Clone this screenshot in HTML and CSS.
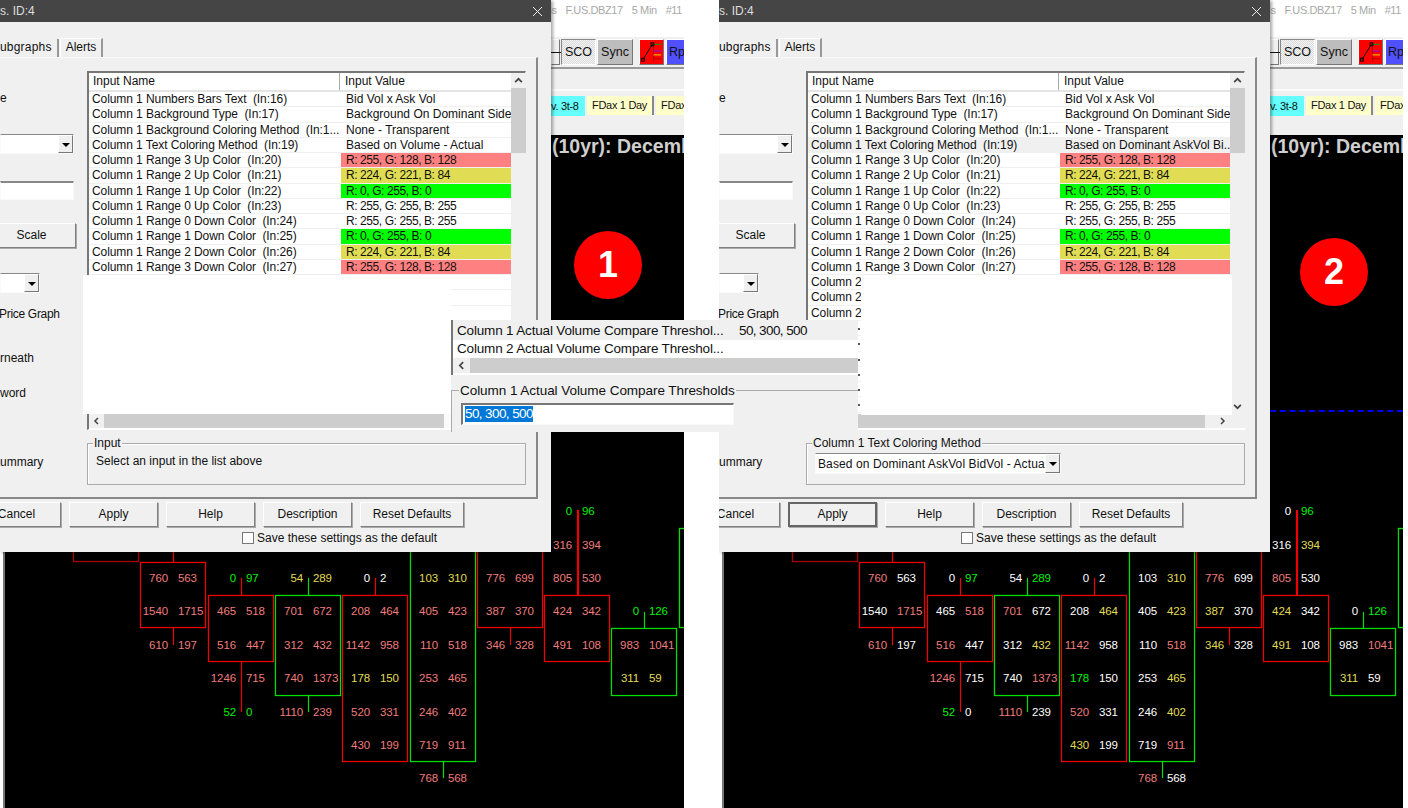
FILE: index.html
```html
<!DOCTYPE html>
<html lang="en">
<head>
    <meta charset="UTF-8">
    <title>Study settings comparison</title>
    <link rel="stylesheet" href="styles.css">
</head>
<body>

<div class="shots">

    <!-- Screenshot 1 -->
    <section class="shot" id="shot-1">
        <div class="chart-window">
            <div class="win-head"><span>IBs</span><span>F.US.DBZ17</span><span>5 Min</span><span>#11</span></div>
            <div class="toolbar">
                <div class="tool tool-cut">&#8212;</div>
                <div class="tool tool-sco">SCO</div>
                <div class="tool tool-sync">Sync</div>
                <div class="tool tool-red">
                    <svg viewBox="0 0 24 24" width="24" height="24"><path d="M14 4v18" stroke="#a00" fill="none"/><path d="M14 4h8" stroke="#0a0"/><path d="M14 11h8" stroke="#80f"/><path d="M14 15h8" stroke="#dd0"/><path d="M14 19h8" stroke="#a00"/><path d="M3 20 13 4" stroke="#000" fill="none"/><rect x="1.5" y="18.5" width="3" height="3" fill="none" stroke="#000"/><rect x="11.5" y="2.5" width="3" height="3" fill="none" stroke="#000"/></svg>
                </div>
                <div class="tool tool-blue">Rp</div>
            </div>
            <div class="tabstrip">
                <div class="ctab ctab-cyan">v. 3t-8</div>
                <div class="ctab">FDax 1 Day</div>
                <div class="ctab">FDax</div>
            </div>
            <div class="chart"></div>
        </div>
        <div class="plot" data-set="0"></div>
        <div class="chart-title">(10yr): Decemb</div>
        <div class="marker marker-1">1</div>

        <div class="dialog">
            <div class="dlg-title"><span>s. ID:4</span><svg class="dlg-close" viewBox="0 0 10 10"><path d="M0 0 10 10M10 0 0 10"/></svg></div>
            <div class="dlg-tabs">
                <div class="dlg-tab">ubgraphs</div>
                <div class="dlg-tab">Alerts</div>
            </div>
            <div class="pane">
                <div class="pane-side">
                    <div class="side-text side-tag-top">e</div>
                    <div class="combo side-combo-a"><span class="combo-arrow"></span></div>
                    <div class="edit side-edit"></div>
                    <div class="btn side-scale">Scale</div>
                    <div class="combo side-combo-b"><span class="combo-arrow"></span></div>
                    <div class="side-text side-graph">Price Graph</div>
                    <div class="side-text side-beneath">rneath</div>
                    <div class="side-text side-keyword">word</div>
                    <div class="side-text side-summary">ummary</div>
                </div>
                <div class="pane-main">
                    <div class="list">
                        <div class="list-body">
                            <div class="list-head"><div>Input Name</div><div>Input Value</div></div>
                            <div class="row"><div class="name">Column 1 Numbers Bars Text  (In:16)</div><div class="value">Bid Vol x Ask Vol</div></div>
                            <div class="row"><div class="name">Column 1 Background Type  (In:17)</div><div class="value">Background On Dominant Side</div></div>
                            <div class="row"><div class="name">Column 1 Background Coloring Method  (In:1...</div><div class="value">None - Transparent</div></div>
                            <div class="row"><div class="name">Column 1 Text Coloring Method  (In:19)</div><div class="value">Based on Volume - Actual</div></div>
                            <div class="row"><div class="name">Column 1 Range 3 Up Color  (In:20)</div><div class="value v-rgb v-red">R: 255, G: 128, B: 128</div></div>
                            <div class="row"><div class="name">Column 1 Range 2 Up Color  (In:21)</div><div class="value v-rgb v-yellow">R: 224, G: 221, B: 84</div></div>
                            <div class="row"><div class="name">Column 1 Range 1 Up Color  (In:22)</div><div class="value v-rgb v-green">R: 0, G: 255, B: 0</div></div>
                            <div class="row"><div class="name">Column 1 Range 0 Up Color  (In:23)</div><div class="value v-rgb">R: 255, G: 255, B: 255</div></div>
                            <div class="row"><div class="name">Column 1 Range 0 Down Color  (In:24)</div><div class="value v-rgb">R: 255, G: 255, B: 255</div></div>
                            <div class="row"><div class="name">Column 1 Range 1 Down Color  (In:25)</div><div class="value v-rgb v-green">R: 0, G: 255, B: 0</div></div>
                            <div class="row"><div class="name">Column 1 Range 2 Down Color  (In:26)</div><div class="value v-rgb v-yellow">R: 224, G: 221, B: 84</div></div>
                            <div class="row"><div class="name">Column 1 Range 3 Down Color  (In:27)</div><div class="value v-rgb v-red">R: 255, G: 128, B: 128</div></div>
                            <div class="row"><div class="name"></div><div class="value"></div></div>
                            <div class="row"><div class="name"></div><div class="value"></div></div>
                            <div class="row"><div class="name"></div><div class="value"></div></div>
                        </div>
                        <div class="vscroll">
                            <svg class="chev" viewBox="0 0 8 8"><path d="M1 5.5 4 2.5 7 5.5"/></svg>
                            <div class="vthumb"></div>
                            <svg class="chev chev-end" viewBox="0 0 8 8"><path d="M1 2.5 4 5.5 7 2.5"/></svg>
                        </div>
                        <div class="hscroll">
                            <svg class="chev" viewBox="0 0 8 8"><path d="M5.5 1 2.5 4 5.5 7"/></svg>
                            <div class="hthumb"></div>
                            <svg class="chev" viewBox="0 0 8 8"><path d="M2.5 1 5.5 4 2.5 7"/></svg>
                        </div>
                        <div class="corner"></div>
                    </div>
                    <div class="group">
                        <div class="group-label">Input</div>
                        <div class="group-text">Select an input in the list above</div>
                    </div>
                </div>
            </div>
            <div class="dlg-actions">
                <div class="btn btn-cancel">Cancel</div>
                <div class="btn">Apply</div>
                <div class="btn">Help</div>
                <div class="btn">Description</div>
                <div class="btn btn-wide">Reset Defaults</div>
            </div>
            <div class="dlg-save"><span class="check"></span>Save these settings as the default</div>
            <div class="patch patch-1"></div>
            <div class="patch patch-1b"></div>
        </div>
    </section>

    <!-- Screenshot 2 -->
    <section class="shot" id="shot-2">
        <div class="chart-window">
            <div class="win-head"><span>IBs</span><span>F.US.DBZ17</span><span>5 Min</span><span>#11</span></div>
            <div class="toolbar">
                <div class="tool tool-cut">&#8212;</div>
                <div class="tool tool-sco">SCO</div>
                <div class="tool tool-sync">Sync</div>
                <div class="tool tool-red">
                    <svg viewBox="0 0 24 24" width="24" height="24"><path d="M14 4v18" stroke="#a00" fill="none"/><path d="M14 4h8" stroke="#0a0"/><path d="M14 11h8" stroke="#80f"/><path d="M14 15h8" stroke="#dd0"/><path d="M14 19h8" stroke="#a00"/><path d="M3 20 13 4" stroke="#000" fill="none"/><rect x="1.5" y="18.5" width="3" height="3" fill="none" stroke="#000"/><rect x="11.5" y="2.5" width="3" height="3" fill="none" stroke="#000"/></svg>
                </div>
                <div class="tool tool-blue">Rp</div>
            </div>
            <div class="tabstrip">
                <div class="ctab ctab-cyan">v. 3t-8</div>
                <div class="ctab">FDax 1 Day</div>
                <div class="ctab">FDax</div>
            </div>
            <div class="chart"></div>
        </div>
        <div class="plot" data-set="1"></div>
        <div class="chart-title">(10yr): Decemb</div>
        <div class="dash-line"></div>
        <div class="marker marker-2">2</div>

        <div class="dialog">
            <div class="dlg-title"><span>s. ID:4</span><svg class="dlg-close" viewBox="0 0 10 10"><path d="M0 0 10 10M10 0 0 10"/></svg></div>
            <div class="dlg-tabs">
                <div class="dlg-tab">ubgraphs</div>
                <div class="dlg-tab">Alerts</div>
            </div>
            <div class="pane">
                <div class="pane-side">
                    <div class="side-text side-tag-top">e</div>
                    <div class="combo side-combo-a"><span class="combo-arrow"></span></div>
                    <div class="edit side-edit"></div>
                    <div class="btn side-scale">Scale</div>
                    <div class="combo side-combo-b"><span class="combo-arrow"></span></div>
                    <div class="side-text side-graph">Price Graph</div>
                    <div class="side-text side-beneath"></div>
                    <div class="side-text side-keyword"></div>
                    <div class="side-text side-summary">ummary</div>
                </div>
                <div class="pane-main">
                    <div class="list">
                        <div class="list-body">
                            <div class="list-head"><div>Input Name</div><div>Input Value</div></div>
                            <div class="row"><div class="name">Column 1 Numbers Bars Text  (In:16)</div><div class="value">Bid Vol x Ask Vol</div></div>
                            <div class="row"><div class="name">Column 1 Background Type  (In:17)</div><div class="value">Background On Dominant Side</div></div>
                            <div class="row"><div class="name">Column 1 Background Coloring Method  (In:1...</div><div class="value">None - Transparent</div></div>
                            <div class="row row-active"><div class="name">Column 1 Text Coloring Method  (In:19)</div><div class="value">Based on Dominant AskVol Bi...</div></div>
                            <div class="row"><div class="name">Column 1 Range 3 Up Color  (In:20)</div><div class="value v-rgb v-red">R: 255, G: 128, B: 128</div></div>
                            <div class="row"><div class="name">Column 1 Range 2 Up Color  (In:21)</div><div class="value v-rgb v-yellow">R: 224, G: 221, B: 84</div></div>
                            <div class="row"><div class="name">Column 1 Range 1 Up Color  (In:22)</div><div class="value v-rgb v-green">R: 0, G: 255, B: 0</div></div>
                            <div class="row"><div class="name">Column 1 Range 0 Up Color  (In:23)</div><div class="value v-rgb">R: 255, G: 255, B: 255</div></div>
                            <div class="row"><div class="name">Column 1 Range 0 Down Color  (In:24)</div><div class="value v-rgb">R: 255, G: 255, B: 255</div></div>
                            <div class="row"><div class="name">Column 1 Range 1 Down Color  (In:25)</div><div class="value v-rgb v-green">R: 0, G: 255, B: 0</div></div>
                            <div class="row"><div class="name">Column 1 Range 2 Down Color  (In:26)</div><div class="value v-rgb v-yellow">R: 224, G: 221, B: 84</div></div>
                            <div class="row"><div class="name">Column 1 Range 3 Down Color  (In:27)</div><div class="value v-rgb v-red">R: 255, G: 128, B: 128</div></div>
                            <div class="row"><div class="name">Column 2</div><div class="value"></div></div>
                            <div class="row"><div class="name">Column 2</div><div class="value"></div></div>
                            <div class="row"><div class="name">Column 2</div><div class="value"></div></div>
                            <div class="row row-peek"><div class="name"></div><div class="value"></div></div>
                            <div class="row row-peek"><div class="name"></div><div class="value"></div></div>
                            <div class="row row-peek"><div class="name"></div><div class="value"></div></div>
                            <div class="row row-peek"><div class="name"></div><div class="value"></div></div>
                            <div class="row row-peek"><div class="name"></div><div class="value"></div></div>
                            <div class="row row-peek"><div class="name"></div><div class="value"></div></div>
                        </div>
                        <div class="vscroll">
                            <svg class="chev" viewBox="0 0 8 8"><path d="M1 5.5 4 2.5 7 5.5"/></svg>
                            <div class="vthumb"></div>
                            <svg class="chev chev-end" viewBox="0 0 8 8"><path d="M1 2.5 4 5.5 7 2.5"/></svg>
                        </div>
                        <div class="hscroll">
                            <svg class="chev" viewBox="0 0 8 8"><path d="M5.5 1 2.5 4 5.5 7"/></svg>
                            <div class="hthumb"></div>
                            <svg class="chev" viewBox="0 0 8 8"><path d="M2.5 1 5.5 4 2.5 7"/></svg>
                        </div>
                        <div class="corner"></div>
                    </div>
                    <div class="group">
                        <div class="group-label">Column 1 Text Coloring Method</div>
                        <div class="combo combo-method"><span class="combo-value">Based on Dominant AskVol BidVol - Actua</span><span class="combo-arrow"></span></div>
                    </div>
                </div>
            </div>
            <div class="dlg-actions">
                <div class="btn btn-cancel">Cancel</div>
                <div class="btn btn-default">Apply</div>
                <div class="btn">Help</div>
                <div class="btn">Description</div>
                <div class="btn btn-wide">Reset Defaults</div>
            </div>
            <div class="dlg-save"><span class="check"></span>Save these settings as the default</div>
            <div class="patch patch-2"></div>
        </div>
    </section>

    <!-- Enlarged piece pasted across both screenshots -->
    <div class="inset">
        <div class="inset-list">
            <div class="inset-row inset-row-active"><div class="inset-name">Column 1 Actual Volume Compare Threshol...</div><div class="inset-value">50, 300, 500</div></div>
            <div class="inset-row"><div class="inset-name">Column 2 Actual Volume Compare Threshol...</div><div class="inset-value"></div></div>
            <div class="inset-scroll">
                <svg class="chev" viewBox="0 0 8 8"><path d="M5.5 1 2.5 4 5.5 7"/></svg>
                <div class="inset-thumb"></div>
            </div>
        </div>
        <div class="inset-group">
            <div class="inset-label">Column 1 Actual Volume Compare Thresholds</div>
            <div class="inset-edit"><span class="selected">50, 300, 500</span></div>
        </div>
    </div>
</div>

<script src="chart.js"></script>
</body>
</html>
```

FILE: styles.css
```css
body {
    margin: 0;
    background-color: #fff;
    font-family: "Liberation Sans", Arial, sans-serif;
    font-size: 12px;
    color: #111;
    overflow: hidden;
}
.shots {
    position: relative;
    display: flex;
    gap: 35px;
    width: 1408px;
    height: 808px;
}
.shot {
    position: relative;
    width: 684px;
    height: 808px;
    overflow: hidden;
    flex-shrink: 0;
}

/* chart window behind the dialog */
.chart-window {
    display: flex;
    flex-direction: column;
    height: 100%;
}
.win-head {
    display: flex;
    justify-content: flex-end;
    gap: 9px;
    height: 37px;
    padding: 4px 2px 0 0;
    box-sizing: border-box;
    color: #a8a8a8;
    font-size: 11px;
    letter-spacing: -0.4px;
    line-height: 13px;
}
.toolbar {
    display: flex;
    height: 32px;
    padding: 2px 0 0 551px;
    box-sizing: border-box;
    background-color: #f0f0f0;
    border-bottom: 2px solid #999;
}
.tool {
    display: flex;
    align-items: center;
    justify-content: center;
    flex-shrink: 0;
    height: 26px;
    margin-right: 1px;
    padding-bottom: 1px;
    box-sizing: border-box;
    border: 1px solid;
    border-color: #fff #777 #777 #fff;
    font-size: 12.5px;
}
.tool-cut { width: 9px; background-color: #f0f0f0; }
.tool-sco {
    width: 35px;
    border-color: #888 #fff #fff #888;
    background: repeating-conic-gradient(#d8d8d8 0 25%, #f6f6f6 0 50%) 0 0 / 2px 2px;
}
.tool-sync { width: 36px; margin-right: 6px; background-color: #bdbdbd; }
.tool-red { width: 25px; margin-right: 2px; background-color: #f00; }
.tool-blue { width: 30px; justify-content: flex-start; padding-left: 2px; background-color: #5050ff; color: #111; }
.tabstrip {
    display: flex;
    align-items: flex-start;
    height: 66px;
    padding: 27px 0 0 551px;
    box-sizing: border-box;
    background: linear-gradient(#f0f0f0 20px, #fbfbfb 20px, #fbfbfb 22px, #f0f0f0 22px);
}
.ctab {
    flex-shrink: 0;
    height: 19px;
    padding: 0 5px;
    margin-right: 2px;
    border-right: 2px solid #888;
    background-color: #ffffcc;
    font-size: 11px;
    letter-spacing: -0.3px;
    line-height: 18px;
}
.ctab-cyan {
    width: 29px;
    padding: 0 5px 0 0;
    border-right: 0;
    border-top: 1px solid #6ff;
    background-color: #66ffff;
    white-space: nowrap;
}
.chart {
    flex: 1;
    background-color: #000;
}
.chart-title {
    position: absolute;
    left: 552px;
    top: 136px;
    color: #cfcfcf;
    font-size: 19.5px;
    font-weight: bold;
    line-height: 20px;
    white-space: nowrap;
}
.dash-line {
    position: absolute;
    left: 551px;
    right: 0;
    top: 410px;
    border-top: 2px dashed #0000ff;
}
.marker {
    position: absolute;
    width: 68px;
    height: 68px;
    border-radius: 50%;
    background-color: #f00;
    color: #fff;
    font-size: 36px;
    font-weight: bold;
    line-height: 68px;
    text-align: center;
}
.marker-1 { left: 574px; top: 231px; }
.marker-2 { left: 581px; top: 238px; }

/* numbers bars, placed by chart.js */
.plot {
    position: absolute;
    inset: 0;
    border-left: 3px solid #fff;
    box-sizing: border-box;
}
.plot::before {
    content: "";
    position: absolute;
    left: 0;
    top: 135px;
    bottom: 0;
    width: 2px;
    background-color: #777;
}
.bar-box, .bar-stem {
    position: absolute;
    box-sizing: border-box;
}
.bar-box { border: 1px solid; }
.bar-stem { width: 1px; }
.bar-stem-thick { width: 2px; }
.bar-cell {
    position: absolute;
    width: 40px;
    font-size: 11.5px;
    letter-spacing: -0.1px;
    line-height: 14px;
}
.bar-cell-left { text-align: right; }
.c-s { color: #f07c7c; }
.c-w { color: #fff; }
.c-y { color: #e0dd54; }
.c-g { color: #00f000; }

/* settings dialog */
.dialog {
    position: absolute;
    left: 0;
    top: 0;
    width: 551px;
    height: 552px;
    background-color: #f0f0f0;
    box-shadow: 2px 1px 3px rgba(0, 0, 0, 0.35);
}
.dlg-title {
    display: flex;
    align-items: center;
    justify-content: space-between;
    height: 22px;
    padding-right: 9px;
    box-sizing: border-box;
    background-color: #454545;
    color: #ddd;
}
.dlg-close {
    width: 9px;
    height: 9px;
    stroke: #fff;
    stroke-width: 1;
    fill: none;
}
.dlg-tabs {
    display: flex;
    align-items: flex-end;
    height: 35px;
}
.dlg-tab {
    height: 18px;
    padding-right: 5px;
    margin-right: 1px;
    border-right: 2px solid #999;
    letter-spacing: 0.2px;
    line-height: 17px;
}
.dlg-tab + .dlg-tab {
    padding-left: 5px;
    border-top: 1px solid #fff;
    border-left: 1px solid #fff;
    letter-spacing: 0;
}
.pane {
    display: flex;
    width: 538px;
    height: 442px;
    box-sizing: border-box;
    border-top: 1px solid #fafafa;
    border-right: 2px solid #888;
    border-bottom: 2px solid #888;
}
.pane-side {
    width: 87px;
    flex-shrink: 0;
}
.pane-main {
    width: 439px;
    padding-top: 13px;
}

/* left column, cut off by the screenshot edge */
.side-text {
    height: 16px;
    line-height: 16px;
    white-space: nowrap;
}
.side-tag-top { margin-top: 32px; }
.side-combo-a { margin-top: 28px; width: 74px; height: 20px; }
.side-edit { margin-top: 27px; width: 74px; height: 19px; }
.side-scale { margin: 23px 0 0 -13px; width: 88px; height: 25px; }
.side-combo-b { margin-top: 25px; width: 40px; height: 20px; }
.side-graph { margin: 13px 0 0 -1px; letter-spacing: -0.3px; }
.side-beneath { margin-top: 28px; }
.side-keyword { margin-top: 19px; }
.side-summary { margin-top: 53px; }

.combo, .edit {
    display: flex;
    justify-content: flex-end;
    box-sizing: border-box;
    border: 1px solid #fafafa;
    border-top-color: #888;
    background-color: #fff;
}
.edit { border-top-width: 2px; }
.combo-arrow {
    position: relative;
    width: 15px;
    flex-shrink: 0;
    box-sizing: border-box;
    border: 1px solid;
    border-color: #fff #777 #777 #fff;
    background-color: #f0f0f0;
}
.combo-arrow::after {
    content: "";
    position: absolute;
    left: 3px;
    top: 7px;
    border: 4px solid transparent;
    border-top: 4px solid #000;
    border-bottom: 0;
}
.btn {
    height: 25px;
    width: 89px;
    flex-shrink: 0;
    box-sizing: border-box;
    border: 1px solid;
    border-color: #fff #808080 #808080 #fff;
    box-shadow: 1px 1px 0 #aaa;
    background-color: #f0f0f0;
    line-height: 23px;
    text-align: center;
}

/* inputs list */
.list {
    display: grid;
    grid-template-columns: 422px 15px;
    grid-template-rows: 341px 14px;
    height: 359px;
    box-sizing: border-box;
    border-top: 2px solid #777;
    border-left: 2px solid #777;
    border-right: 1px solid #fff;
    border-bottom: 1px solid #fff;
    background-color: #fff;
}
.list-body {
    overflow: hidden;
}
.list-head {
    display: grid;
    grid-template-columns: 251px 171px;
    height: 19px;
    box-sizing: border-box;
    border-bottom: 2px solid #e4e4e4;
    background-color: #fff;
    line-height: 17px;
}
.list-head div { padding-left: 4px; border-right: 1px solid #aaa; }
.list-head div + div { padding-left: 5px; border-right: 0; }
.row {
    display: grid;
    grid-template-columns: 251px 171px;
    height: 15.27px;
    box-sizing: border-box;
    border-bottom: 1px solid #f0f0f0;
    line-height: 14px;
    white-space: pre;
}
.row-active { background-color: #f0f0f0; }
.name {
    padding-left: 3px;
    overflow: hidden;
    letter-spacing: -0.08px;
}
.row-peek .name::after {
    content: "";
    display: block;
    width: 2px;
    height: 2px;
    margin: 7px 0 0 47px;
    background-color: #555;
}
.value {
    padding-left: 5px;
    margin-left: 1px;
    overflow: hidden;
}
.v-rgb { letter-spacing: -0.42px; }
.v-red { background-color: #ff8080; }
.v-yellow { background-color: #e0dd54; }
.v-green { background-color: #00ff00; }
.vscroll {
    display: flex;
    flex-direction: column;
    background-color: #f0f0f0;
}
.vthumb {
    height: 65px;
    background-color: #cdcdcd;
}
.chev {
    display: block;
    flex-shrink: 0;
    width: 15px;
    height: 15px;
    padding: 3px;
    box-sizing: border-box;
    fill: none;
    stroke: #444;
    stroke-width: 1.5;
}
.chev-end { margin-top: auto; }
.hscroll {
    display: flex;
    background-color: #f0f0f0;
}
.hthumb {
    width: 382px;
    background-color: #cdcdcd;
}
.hscroll .chev { height: 14px; }
.hscroll .chev:last-child { margin-left: auto; }
.corner { background-color: #f0f0f0; }

/* group box under the list */
.group {
    position: relative;
    height: 42px;
    margin-top: 13px;
    box-sizing: border-box;
    border: 1px solid #aaa;
    box-shadow: inset 1px 1px 0 #fff;
}
.group-label {
    position: absolute;
    left: 5px;
    top: -8px;
    padding: 0 1px;
    background-color: #f0f0f0;
    line-height: 14px;
}
.group-text {
    padding: 10px 0 0 8px;
}
.combo-method {
    width: 246px;
    height: 21px;
    margin: 9px 0 0 8px;
}
.combo-value {
    flex: 1;
    padding: 3px 0 0 2px;
    overflow: hidden;
    letter-spacing: 0.1px;
    white-space: nowrap;
}

/* dialog footer */
.dlg-actions {
    display: flex;
    gap: 8px;
    margin: 3px 0 0 -28px;
}
.btn-wide { width: 104px; }
.btn-default {
    border: 2px solid #666;
    line-height: 21px;
}
.dlg-save {
    display: flex;
    align-items: center;
    gap: 3px;
    margin: 4px 0 0 242px;
}
.check {
    width: 10px;
    height: 10px;
    border: 1px solid #777;
    background-color: #fff;
}

/* white paint over the empty list area */
.patch {
    position: absolute;
    background-color: #fff;
}
.patch-1 { left: 83px; top: 275px; width: 368px; height: 139px; }
.patch-1b { left: 444px; top: 414px; width: 7px; height: 14px; background-color: #fafafa; }
.patch-2 { left: 142px; top: 275px; width: 371px; height: 140px; }

/* pasted piece of a later dialog state */
.inset {
    position: absolute;
    left: 451px;
    top: 320px;
    width: 407px;
    height: 112px;
    overflow: hidden;
    background-color: #f0f0f0;
    font-size: 13.5px;
}
.inset-list {
    height: 55px;
    box-sizing: border-box;
    border-left: 2px solid #777;
    background-color: #fff;
}
.inset-row {
    display: grid;
    grid-template-columns: 281px 1fr;
    height: 20px;
    padding-left: 4px;
    box-sizing: border-box;
    line-height: 22px;
    white-space: nowrap;
}
.inset-row + .inset-row { height: 18px; line-height: 18px; }
.inset-row-active { background-color: #f0f0f0; }
.inset-name { letter-spacing: -0.17px; }
.inset-value { padding-left: 1px; letter-spacing: -0.6px; }
.inset-scroll {
    display: flex;
    height: 15px;
    background-color: #f0f0f0;
}
.inset-scroll .chev { width: 17px; height: 15px; }
.inset-thumb {
    flex: 1;
    background-color: #cdcdcd;
}
.inset-group {
    position: relative;
    height: 42px;
    margin-top: 15px;
    border-top: 1px solid #aaa;
    border-left: 1px solid #aaa;
}
.inset-label {
    position: absolute;
    left: 7px;
    top: -8px;
    padding: 0 1px;
    background-color: #f0f0f0;
    letter-spacing: -0.05px;
    line-height: 16px;
    white-space: nowrap;
}
.inset-edit {
    width: 273px;
    height: 22px;
    margin: 12px 0 0 9px;
    padding: 1px 0 0 2px;
    box-sizing: border-box;
    border: 2px solid #777;
    border-right: 1px solid #fafafa;
    border-bottom: 1px solid #fafafa;
    background-color: #fff;
    letter-spacing: -0.6px;
    line-height: 16px;
}
.selected {
    display: inline-block;
    background-color: #0078d7;
    color: #fff;
}
```

FILE: chart.js
```js
// numbers bars: column, box top and bottom, colour, stems, rows
// rows: [row, left, right, colours in shot 1, colours in shot 2]
const STEP = 33.4;
const RED = '#f00000';
const DARK = '#b00000';
const GREEN = '#00e000';

const bars = [
    { col: 0, box: [500, 561], color: DARK, stems: [], rows: [] },
    { col: 1, box: [562, 627], color: RED, stems: [[552, 562], [627, 645]], rows: [
        [0, 760, 563, 'ss', 'sw'], [1, 1540, 1715, 'ss', 'ws'], [2, 610, 197, 'ss', 'sw']
    ] },
    { col: 2, box: [595, 661], color: RED, stems: [[578, 595], [661, 712]], rows: [
        [0, 0, 97, 'gg', 'wg'], [1, 465, 518, 'ss', 'ws'], [2, 516, 447, 'ss', 'sw'],
        [3, 1246, 715, 'ss', 'sw'], [4, 52, 0, 'gg', 'gw']
    ] },
    { col: 3, box: [595, 695], color: GREEN, stems: [[578, 595], [695, 712]], rows: [
        [0, 54, 289, 'yy', 'wg'], [1, 701, 672, 'ss', 'sw'], [2, 312, 432, 'ss', 'wy'],
        [3, 740, 1373, 'ss', 'ws'], [4, 1110, 239, 'ss', 'sw']
    ] },
    { col: 4, box: [595, 761], color: RED, stems: [[578, 595]], rows: [
        [0, 0, 2, 'ww', 'ww'], [1, 208, 464, 'ss', 'wy'], [2, 1142, 958, 'ss', 'sw'],
        [3, 178, 150, 'yy', 'gw'], [4, 520, 331, 'ss', 'sw'], [5, 430, 199, 'ss', 'yw']
    ] },
    { col: 5, box: [500, 761], color: GREEN, stems: [[761, 778]], rows: [
        [0, 103, 310, 'yy', 'wy'], [1, 405, 423, 'ss', 'wy'], [2, 110, 518, 'ss', 'ws'],
        [3, 253, 465, 'ss', 'wy'], [4, 246, 402, 'ss', 'wy'], [5, 719, 911, 'ss', 'ws'],
        [6, 768, 568, 'ss', 'sw']
    ] },
    { col: 6, box: [500, 627], color: RED, stems: [[627, 645]], rows: [
        [0, 776, 699, 'ss', 'sw'], [1, 387, 370, 'ss', 'yw'], [2, 346, 328, 'ss', 'yw']
    ] },
    { col: 7, box: [595, 661], color: RED, stems: [[510, 595]], thick: true, rows: [
        [-2, 0, 96, 'gg', 'wg'], [-1, 316, 394, 'ss', 'wy'], [0, 805, 530, 'ss', 'sw'],
        [1, 424, 342, 'ss', 'yw'], [2, 491, 108, 'ss', 'yw']
    ] },
    { col: 8, box: [628, 695], color: GREEN, stems: [[612, 628]], rows: [
        [1, 0, 126, 'gg', 'wg'], [2, 983, 1041, 'ss', 'ws'], [3, 311, 59, 'yy', 'yw']
    ] },
    { col: 9, box: [528, 627], color: GREEN, stems: [], rows: [] }
];

function addPiece(plot, className, left, top, width, height) {
    const el = document.createElement('div');
    el.className = className;
    el.style.left = (left - 3) + 'px';
    el.style.top = top + 'px';
    if (width) el.style.width = width + 'px';
    if (height) el.style.height = height + 'px';
    plot.appendChild(el);
    return el;
}

document.querySelectorAll('.plot').forEach((plot) => {
    const set = Number(plot.dataset.set);
    bars.forEach((bar) => {
        const center = Math.round(106 + 67.3 * bar.col);
        const box = addPiece(plot, 'bar-box', center - 33, bar.box[0], 66, bar.box[1] - bar.box[0] + 1);
        box.style.borderColor = bar.color;
        box.style.boxShadow = '0 0 1px ' + bar.color + ', inset 0 0 1px ' + bar.color;
        bar.stems.forEach((stem) => {
            const cls = bar.thick ? 'bar-stem bar-stem-thick' : 'bar-stem';
            const line = addPiece(plot, cls, center, stem[0], 0, stem[1] - stem[0]);
            line.style.backgroundColor = bar.color;
            line.style.boxShadow = '0 0 1px ' + bar.color;
        });
        bar.rows.forEach((row) => {
            const y = Math.round(578 + STEP * row[0]) - 7;
            const colors = row[3 + set];
            const left = addPiece(plot, 'bar-cell bar-cell-left c-' + colors[0], center - 45, y);
            left.textContent = row[1];
            const right = addPiece(plot, 'bar-cell c-' + colors[1], center + 5, y);
            right.textContent = row[2];
        });
    });
});
```
